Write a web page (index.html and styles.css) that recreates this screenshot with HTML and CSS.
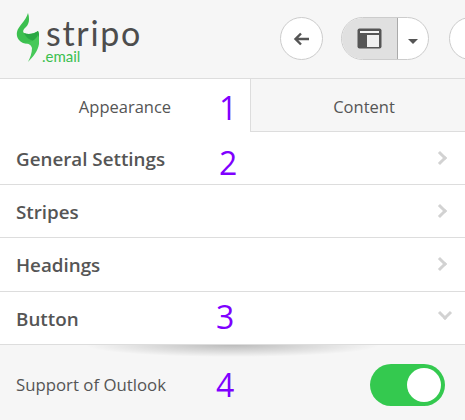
FILE: index.html
```html
<html>
  <head>
    <title>Stripo appearance settings</title>
    <meta name="viewport" content="width=device-width, initial-scale=1.0">
    <link rel="stylesheet" href="styles.css">
  </head>
  <body>
    <div class="page">
      <div class="header">
        <div class="logo">
          <svg class="logo-mark" width="23" height="49" viewBox="0 0 23 49">
            <path d="M12 0 C14 6 13 11 10 14 C8 16 6 18 8 20 C12 22 18 21 22 18 C24 22 23 26 20 28 C15 31 11 31 7 30 C3 28 0 24 1 19 C2 13 10 8 12 0 Z" fill="#3cc04f"/>
            <path d="M8 20 C12 22 18 21 22 18 C24 22 23 26 20 28 C15 28 10 25 8 20 Z" fill="#2aa844"/>
            <path d="M7 30 C11 30 15 31 16 35 C16 40 14 45 12 49 C17 44 22 38 23 31 C23.5 27 23 24 22 22 C20 27 14 30 7 30 Z" fill="#46c958"/>
          </svg>
          <div class="logo-text">
            <span class="logo-name">stripo</span>
            <span class="logo-sub">.email</span>
          </div>
        </div>
        <div class="toolbar">
          <button class="round-btn back-btn">
            <svg width="17" height="14" viewBox="0 0 17 14">
              <path d="M8 1.5 L2.5 7 L8 12.5 M3 7 H16" fill="none" stroke="#555" stroke-width="2.4"/>
            </svg>
          </button>
          <div class="split-btn">
            <div class="split-main">
              <svg width="25" height="21" viewBox="0 0 25 21">
                <rect x="0.5" y="0.5" width="24" height="20" rx="2" fill="#555"/>
                <rect x="3" y="3" width="19" height="2" fill="#f4f4f4"/>
                <rect x="10" y="7" width="12" height="12" fill="#f0f0f0"/>
              </svg>
            </div>
            <div class="split-caret"></div>
          </div>
          <button class="round-btn"></button>
        </div>
      </div>

      <div class="tabs">
        <div class="tab tab-active">Appearance</div>
        <div class="tab tab-other">Content</div>
      </div>

      <div class="row"><span class="row-label">General Settings</span><span class="chevron"></span></div>
      <div class="row"><span class="row-label">Stripes</span><span class="chevron"></span></div>
      <div class="row"><span class="row-label">Headings</span><span class="chevron"></span></div>
      <div class="row"><span class="row-label">Button</span><span class="chevron chevron-down"></span></div>

      <div class="option">
        <span>Support of Outlook</span>
        <div class="toggle"><div class="toggle-knob"></div></div>
      </div>

      <span class="mark mark-1">1</span>
      <span class="mark mark-2">2</span>
      <span class="mark mark-3">3</span>
      <span class="mark mark-4">4</span>
    </div>
  </body>
</html>
```

FILE: styles.css
```css
html, body {
  margin: 0;
  overflow: hidden;
}

body {
  background-color: #f6f6f6;
  color: #555;
  font-family: "Open Sans", sans-serif;
}

.page {
  position: relative;
  width: 465px;
  height: 420px;
  overflow: hidden;
}

.header {
  display: flex;
  align-items: center;
  justify-content: space-between;
  height: 78px;
  padding-left: 16px;
  border-bottom: 1px solid #ddd;
}

.logo {
  display: flex;
  align-items: flex-start;
  gap: 7px;
  align-self: flex-start;
  margin-top: 13px;
}

.logo-text {
  display: flex;
  flex-direction: column;
}

.logo-name {
  font-family: Lato, sans-serif;
  font-size: 34px;
  line-height: 34px;
  letter-spacing: 1.7px;
  margin-top: 3px;
  color: #4d4d4d;
}

.logo-sub {
  font-family: Lato, sans-serif;
  font-size: 15px;
  line-height: 12px;
  color: #3cc04f;
  margin-left: -4px;
}

.toolbar {
  display: flex;
  align-items: center;
  gap: 20px;
  margin-top: -1px;
  margin-right: -27px;
}

.round-btn {
  display: flex;
  align-items: center;
  justify-content: center;
  width: 43px;
  height: 43px;
  padding: 0;
  border: 1px solid #ccc;
  border-radius: 50%;
  background-color: #fff;
}

.back-btn {
  margin-right: -2px;
}

.split-btn {
  display: flex;
  height: 43px;
  box-sizing: border-box;
  border: 1px solid #ccc;
  border-radius: 22px;
  background-color: #fff;
  overflow: hidden;
}

.split-main {
  display: flex;
  align-items: center;
  justify-content: center;
  box-sizing: border-box;
  width: 56px;
  background-color: #e0e0e0;
  border-right: 1px solid #aaa;
}

.split-caret {
  position: relative;
  width: 30px;
}

.split-caret::after {
  content: "";
  position: absolute;
  left: 10px;
  top: 21px;
  border-left: 5px solid transparent;
  border-right: 5px solid transparent;
  border-top: 5px solid #555;
}

.tabs {
  display: flex;
  height: 53px;
}

.tab {
  display: flex;
  align-items: center;
  justify-content: center;
  flex: 1;
  font-size: 16.5px;
  border-bottom: 1px solid #ddd;
  box-sizing: border-box;
  padding-top: 2px;
}

.tab-active {
  flex: 0 0 251px;
  background-color: #fff;
  border-bottom: none;
  border-right: 1px solid #ddd;
}

.tab-other {
  padding-left: 12px;
}

.row {
  display: flex;
  align-items: center;
  justify-content: space-between;
  height: 53.2px;
  box-sizing: border-box;
  padding: 0 20px 0 16px;
  background-color: #fff;
  border-bottom: 1px solid #ddd;
  font-size: 18.8px;
  font-weight: 600;
}

.row-label {
  margin-top: 2px;
}

.chevron {
  box-sizing: border-box;
  width: 10px;
  height: 10px;
  border-top: 3px solid #d2d2d2;
  border-right: 3px solid #d2d2d2;
  transform: rotate(45deg);
}

.chevron-down {
  margin-right: -5px;
  margin-top: -10px;
  transform: rotate(135deg);
}

.option {
  position: relative;
  display: flex;
  align-items: center;
  justify-content: space-between;
  height: 75px;
  box-sizing: border-box;
  padding: 5px 20px 0 16px;
  font-size: 16.8px;
}

/* soft shadow under the open section */
.option::before {
  content: "";
  position: absolute;
  left: 85px;
  right: 85px;
  top: 0;
  height: 12px;
  background: radial-gradient(ellipse 50% 100% at 50% 0, rgba(0, 0, 0, 0.24), rgba(0, 0, 0, 0));
}

.toggle {
  display: flex;
  align-items: center;
  justify-content: flex-end;
  width: 75px;
  height: 42px;
  box-sizing: border-box;
  padding-right: 4px;
  border-radius: 21px;
  background-color: #34c94f;
}

.toggle-knob {
  width: 34px;
  height: 34px;
  border-radius: 50%;
  background-color: #fff;
}

.mark {
  position: absolute;
  font-family: "Open Sans", sans-serif;
  font-size: 32px;
  line-height: 40px;
  color: #7f00ff;
}

.mark-1 { left: 219px; top: 88px; }
.mark-2 { left: 219px; top: 143px; }
.mark-3 { left: 216px; top: 297px; }
.mark-4 { left: 216px; top: 365px; }
```
